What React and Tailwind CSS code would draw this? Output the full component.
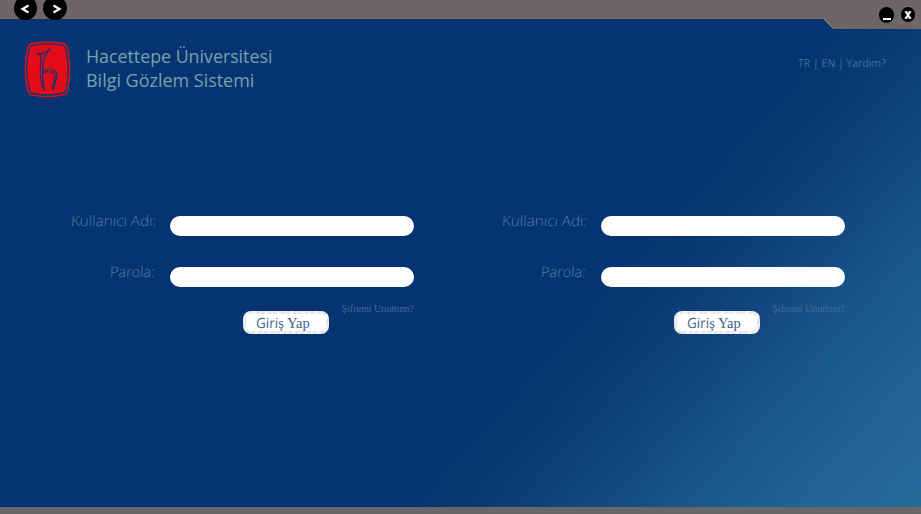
function Logo() {
  return (
    <svg viewBox="0 0 47 57" className="h-[57px] w-[47px] shrink-0">
      <path d="M7 2Q23.500-1.500 40 2Q43 3.500 44 8Q49 28.500 44 49Q43 53 40 54.500Q23.500 58 7 54.500Q4 53 3 49Q-2 28.500 3 8Q4 3.500 7 2Z" fill="#e30b17" />
      <path d="M8.500 4.200Q23.500 1 38.500 4.200Q41 5 42 9Q46.500 28.500 42 48Q41 52 38.500 52.500Q23.500 55.500 8.500 52.500Q6 52 5 48Q.5 28.500 5 9Q6 5 8.500 4.200Z" fill="#e30b17" stroke="#0d3571" strokeWidth="1.300" />
      <path d="M12 12.500C17 13.500 22 12 26.500 7.500C21 13 19 18 18.800 26C18.500 35 18.500 43 20.500 49.500M12 12.500C18.500 13 17 17 16.500 24C15.700 34 16 42 20.500 49.500M18.700 30C23 27 32 28 32.800 33C32 40 31 45 28.500 49.500M18.700 32C23.500 29.500 31 30.500 31 35C30 42 28.500 45 28.500 49.500" fill="none" stroke="#0d3571" strokeWidth="1.200" />
    </svg>
  );
}

function LoginForm() {
  return (
    <form className="h-[122px] w-[343px] font-['Open_Sans',sans-serif] text-[#507c9e]">
      <div className="flex h-[51px] items-start">
        <label className="w-[85px] text-[14.5px] leading-[10px]">
          <span className="block w-max origin-left scale-x-[1.05] -skew-x-3 font-light">Kullanıcı Adı:</span>
        </label>
        <input className="ml-[14px] h-5 w-[244px] rounded-full bg-white" />
      </div>
      <div className="flex h-[44px] items-start">
        <label className="w-[85px] pl-[39px] text-[14.5px] leading-[10px]">
          <span className="block w-max origin-left -skew-x-3 font-light">Parola:</span>
        </label>
        <input type="password" className="ml-[14px] h-5 w-[244px] rounded-full bg-white" />
      </div>
      <div className="flex items-start">
        <button type="button" className="ml-[172px] h-[23px] w-[86px] rounded-lg bg-[repeating-linear-gradient(117deg,#fbfbfb_0px,#dfdfe1_3px,#f6f3f5_5px,#e4e4e4_8px,#fff_11px)] p-[3px] text-left text-[15px] leading-[18px] text-[#3c6288]">
          <span className="block h-[17px] rounded-[5px] bg-white pl-[10px]">
            <span className="block w-max origin-left scale-x-[0.97] font-['Liberation_Serif',serif]"><span className="inline-block -skew-x-3 font-['Open_Sans',sans-serif] text-[14px]">Giri</span>ş Yap</span>
          </span>
        </button>
        <a className="-mt-2 ml-[13px] font-['Liberation_Serif',serif] text-[10px] leading-3 text-[#416c93]"><span className="block w-max">Şifremi Unuttum?</span></a>
      </div>
    </form>
  );
}

export default function App() {
  return (
    <div className="relative flex h-[514px] w-[921px] flex-col overflow-hidden bg-[#6f6566]">
      <header className="z-10 -mb-[10px] flex h-[29px] shrink-0 items-start justify-between">
        <div className="ml-[14px] flex gap-[6px]">
          <button className="-mt-1 flex h-6 w-[23px] items-center justify-center rounded-full bg-black">
            <svg viewBox="0 0 10 10" className="mt-[2px] mr-[2px] size-[10px]"><path d="M8.500 1.500 2.500 5l6 3.500" fill="none" stroke="white" strokeWidth="2.200" /></svg>
          </button>
          <button className="-mt-1 flex h-6 w-6 items-center justify-center rounded-full bg-black">
            <svg viewBox="0 0 10 10" className="mt-[2px] ml-[3px] size-[10px]"><path d="M1.500 1.500 7.500 5 1.500 8.500" fill="none" stroke="white" strokeWidth="2.200" /></svg>
          </button>
        </div>
        <div className="mr-[6px] flex gap-[7px] pt-[7px]">
          <button className="flex h-4 w-[15px] items-end justify-center rounded-full bg-black pb-[3px]"><span className="block h-[2px] w-2 bg-white" /></button>
          <button className="flex h-[15px] w-[14px] items-center justify-center rounded-full bg-black">
            <svg viewBox="0 0 8 8" className="size-2"><path d="M2 1 6 7M6 1 2 7" stroke="white" strokeWidth="2" /><path d="M.8 1h2.600M4.600 1h2.600M.8 7h2.600M4.600 7h2.600" stroke="white" strokeWidth="1.400" /></svg>
          </button>
        </div>
      </header>
      <main className="h-[488px] shrink-0 bg-[linear-gradient(132deg,#063472_0%,#063472_61%,#093a75_67%,#12477f_75%,#17548a_81%,#1f6294_90%,#266c9b_100%)] [clip-path:polygon(0_0,824px_0,834px_10px,921px_10px,921px_488px,0_488px)]">
        <div className="flex h-[197px] items-start justify-between pt-[22px] pr-[35px] pl-[24px]">
          <div className="flex">
            <Logo />
            <h1 className="ml-[15px] pt-[3px] font-['Open_Sans',sans-serif] text-[19px] leading-6 text-[#76a2aa]">
              <span className="block w-max origin-left scale-x-[0.936]">Hacettepe Üniversitesi</span>
              <span className="block w-max origin-left scale-x-[0.945]">Bilgi Gözlem Sistemi</span>
            </h1>
          </div>
          <nav className="w-[88px] pt-[16px] font-['Open_Sans',sans-serif] text-[11px] leading-3 text-[#426f94]">
            <span className="block w-max origin-left scale-x-[0.955] -skew-x-3">TR | EN | Yardım?</span>
          </nav>
        </div>
        <div className="flex gap-[88px] pl-[71px]">
          <LoginForm />
          <LoginForm />
        </div>
      </main>
      <footer className="h-[7px] bg-[#696769]" />
      <svg viewBox="0 0 12 12" className="absolute top-[18px] left-[823px] size-3"><path d="M1 1 11 11" stroke="#aaa79d" strokeWidth=".8" /></svg>
    </div>
  );
}
